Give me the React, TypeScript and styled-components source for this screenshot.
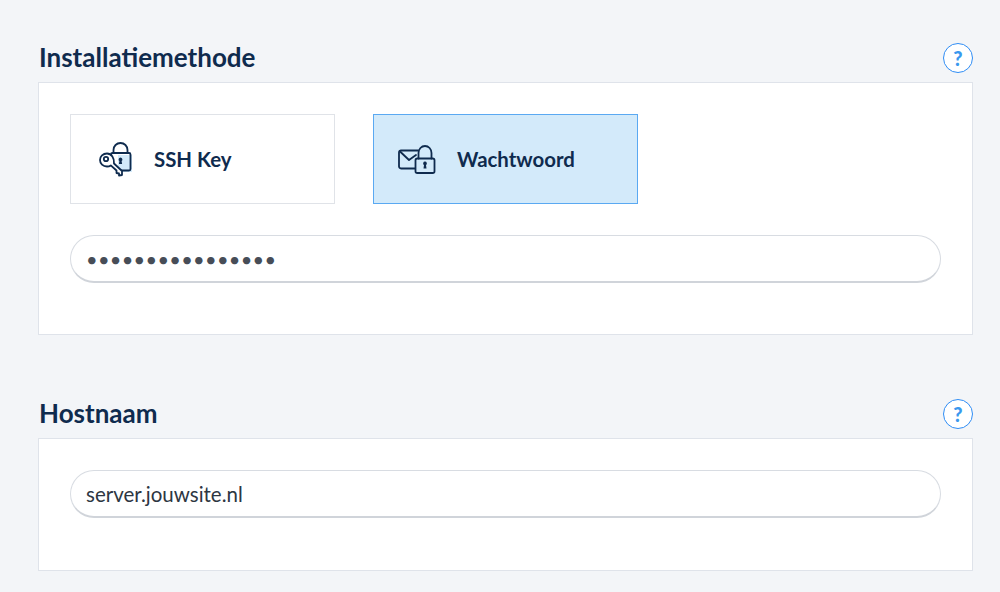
import React from "react";
import styled, { createGlobalStyle } from "styled-components";

const GlobalStyle = createGlobalStyle`
  html, body {
    margin: 0;
    padding: 0;
    background: #f3f5f8;
    font-family: Lato, "Open Sans", sans-serif;
    overflow: hidden;
  }
`;

const Page = styled.div`
  width: 1000px;
  height: 592px;
  padding: 38px 27px 0 38px;
  box-sizing: border-box;
  display: flex;
  flex-direction: column;
  gap: 59px;
`;

const Section = styled.section`
  display: flex;
  flex-direction: column;
`;

const SectionHeader = styled.div`
  height: 44px;
  display: flex;
  justify-content: space-between;
  align-items: flex-start;
`;

const Title = styled.h2`
  margin: 0;
  padding-left: 1px;
  font-size: 26px;
  line-height: 38px;
  font-weight: 700;
  color: #0f2b4e;
`;

const HelpButton = styled.span`
  width: 30px;
  height: 30px;
  margin-top: 5px;
  box-sizing: border-box;
  border: 1.5px solid #2f8df5;
  border-radius: 50%;
  background: #fff;
  color: #3a98ee;
  display: flex;
  align-items: center;
  justify-content: center;
  font-size: 20px;
  font-weight: 900;
`;

const Panel = styled.div<{ $height: number }>`
  height: ${(p) => p.$height}px;
  box-sizing: border-box;
  padding: 31px 31px 0 31px;
  background: #fff;
  border: 1px solid #dfe3ea;
`;

const Options = styled.div`
  display: flex;
  gap: 38px;
  margin-bottom: 31px;
`;

const Option = styled.div<{ $active?: boolean }>`
  width: 265px;
  height: 90px;
  box-sizing: border-box;
  display: flex;
  align-items: center;
  gap: 20px;
  padding-left: 24px;
  background: ${(p) => (p.$active ? "#d3eafa" : "#fff")};
  border: 1px solid ${(p) => (p.$active ? "#5aa9f2" : "#e0e3e8")};
  font-size: 20.4px;
  font-weight: 700;
  color: #0f2b4e;
`;

const Field = styled.input`
  display: block;
  width: 871px;
  height: 48px;
  box-sizing: border-box;
  padding: 0 15px;
  background: #fff;
  border: 1px solid #d8dce2;
  border-bottom: 2px solid #d0d4da;
  border-radius: 24px;
  outline: none;
  font-family: Lato, "Open Sans", sans-serif;
  font-size: 20.5px;
  color: #2d3642;
`;

const PasswordField = styled(Field)`
  color: #474d57;
  font-size: 20px;
  letter-spacing: 0.3px;
`;

const KeyLockIcon = () => (
  <svg width="39" height="35" viewBox="-4 0 39 35" fill="none" stroke="#0f2b4e" strokeWidth="1.8" strokeLinecap="round" strokeLinejoin="round">
    <path d="M19 13H33V30H19Z" fill="#d3eafa" stroke="none" />
    <path d="M12 14V12.5C12 11.6 12.6 11 13.5 11H30C30.9 11 31.5 11.6 31.5 12.5V27C31.5 27.9 30.9 28.5 30 28.5H21" />
    <path d="M14.5 11V8C14.5 4 17.6 1 21.5 1C25.4 1 28.5 4 28.5 8V11" />
    <path d="M21.5 15.5a2 2 0 0 1 1.1 3.6L23.1 22H19.9L20.4 19.1A2 2 0 0 1 21.5 15.5Z" fill="#0f2b4e" stroke="none" />
    <path d="M8 11.5C4 11.5 1 14.5 1 18C1 21.6 4 24.5 8 24.5C9.6 24.5 10.8 24.1 11.8 23.4L17.5 28.5V31L20 31.5V33.5L23 33V29L15 21.5C15.5 16 12.5 11.5 8 11.5Z" fill="#fff" />
    <circle cx="7" cy="17" r="2.2" />
  </svg>
);

const MailLockIcon = () => (
  <svg width="39" height="29" viewBox="0 0 39 29" fill="none" stroke="#0f2b4e" strokeWidth="1.8" strokeLinecap="round" strokeLinejoin="round">
    <path d="M17 23.5H3C1.9 23.5 1 22.7 1 21.6V7.5C1 6.4 1.9 5.5 3 5.5H20" />
    <path d="M1.5 6L11 15L18 10" />
    <rect x="17.5" y="13.5" width="19" height="14.5" rx="1.8" />
    <path d="M20.5 13.5V8C20.5 4 23.4 1 27 1C30.6 1 33.5 4 33.5 8V13.5" />
    <path d="M27 16.5a1.9 1.9 0 0 1 1 3.5L28.5 23.5H25.5L26 20A1.9 1.9 0 0 1 27 16.5Z" fill="#0f2b4e" stroke="none" />
  </svg>
);

export default function App() {
  return (
    <>
      <GlobalStyle />
      <Page>
        <Section>
          <SectionHeader>
            <Title>Installatiemethode</Title>
            <HelpButton>?</HelpButton>
          </SectionHeader>
          <Panel $height={253}>
            <Options>
              <Option>
                <KeyLockIcon />
                SSH Key
              </Option>
              <Option $active>
                <MailLockIcon />
                Wachtwoord
              </Option>
            </Options>
            <PasswordField type="password" readOnly value="aaaaaaaaaaaaaaaa" />
          </Panel>
        </Section>
        <Section>
          <SectionHeader>
            <Title>Hostnaam</Title>
            <HelpButton>?</HelpButton>
          </SectionHeader>
          <Panel $height={133}>
            <Field type="text" readOnly value="server.jouwsite.nl" />
          </Panel>
        </Section>
      </Page>
    </>
  );
}
